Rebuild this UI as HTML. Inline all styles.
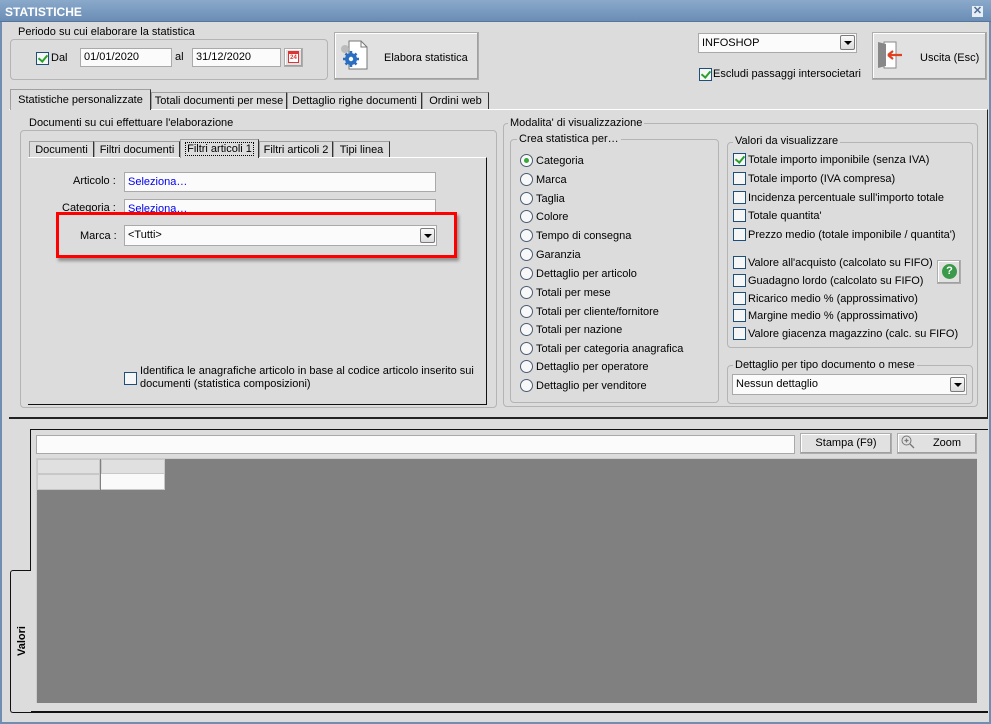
<!DOCTYPE html>
<html><head><meta charset="utf-8"><style>
*{box-sizing:border-box;margin:0;padding:0}
body{width:991px;height:724px;overflow:hidden;background:#dcdcdc;font-family:"Liberation Sans",sans-serif;font-size:11px;color:#000;position:relative}
.a{position:absolute}
.t{position:absolute;white-space:nowrap;line-height:14px}
.gb{position:absolute;border:1px solid #b4b4b4;border-radius:4px}
.gl{position:absolute;background:#dcdcdc;padding:0 2px;line-height:13px;white-space:nowrap}
.inp{position:absolute;background:#fbfbfb;border:1px solid #a9a9a9;line-height:16px;padding-left:3px;white-space:nowrap;overflow:hidden}
.btn{position:absolute;background:#e1e1e1;border:1px solid #adadad;box-shadow:inset -1px -1px 0 #a0a0a0,inset 1px 1px 0 #fff;text-align:center}
.cb{position:absolute;width:13px;height:13px;border:1px solid #1c4f7c;background:#f6f6f6}
.cb.on::after{content:"";position:absolute;left:3px;top:0px;width:4px;height:7px;border:solid #2aa02a;border-width:0 2px 2px 0;transform:rotate(40deg)}
.rd{position:absolute;width:13px;height:13px;border:1px solid #4a5c74;border-radius:50%;background:#f8f8f8}
.rd.on::after{content:"";position:absolute;left:3px;top:3px;width:5px;height:5px;border-radius:50%;background:#38a838}
.dd{position:absolute;width:15px;height:15px;border:1px solid #7a7a7a;border-radius:2px;background:linear-gradient(#fafafa,#dcdcdc)}
.dd::after{content:"";position:absolute;left:3px;top:5px;border:4px solid transparent;border-top:4px solid #000;border-bottom:0}
.tab{position:absolute;border:1px solid #a0a0a0;border-bottom:none;border-right:1px solid #333;background:#dcdcdc;line-height:16px;white-space:nowrap;text-align:center;overflow:hidden}
</style></head><body>
<div class="a" style="left:0;top:0;width:991px;height:724px;border:2px solid #6f8eb2;border-top:none"></div>
<div class="a" style="left:0;top:0;width:991px;height:22px;background:linear-gradient(#8aa9cb,#6b8db5);border-bottom:1px solid #55759c"></div>
<div class="t" style="left:5px;top:5px;color:#fff;font-weight:bold;font-size:12px">STATISTICHE</div>
<div class="a" style="left:972px;top:6px;width:11px;height:11px;background:#e8eef5;color:#4f6f95;font-size:11px;line-height:10px;text-align:center;font-weight:bold">✕</div>

<div class="gb" style="left:10px;top:39px;width:318px;height:41px"></div>
<div class="gl" style="left:16px;top:26px">Periodo su cui elaborare la statistica</div>
<div class="cb on" style="left:36px;top:52px"></div>
<div class="t" style="left:51px;top:51px">Dal</div>
<div class="inp" style="left:80px;top:48px;width:92px;height:19px">01/01/2020</div>
<div class="t" style="left:175px;top:50px">al</div>
<div class="inp" style="left:192px;top:48px;width:89px;height:19px">31/12/2020</div>
<div class="btn" style="left:284px;top:48px;width:19px;height:19px"></div>
<div class="a" style="left:288px;top:51px;width:11px;height:12px;background:#fff;border:1px solid #d33;border-top:3px solid #d33;color:#d33;font-size:6px;line-height:8px;text-align:center;font-weight:bold">24</div>

<div class="btn" style="left:334px;top:32px;width:145px;height:48px"></div>
<svg class="a" style="left:338px;top:39px" width="32" height="32" viewBox="0 0 32 32"><path d="M11 2h12l6 6v22H11z" fill="#fff" stroke="#777"/><path d="M23 2v6h6" fill="none" stroke="#777"/><circle cx="7" cy="10" r="4" fill="#bbb"/><circle cx="13" cy="20" r="6" fill="#2a6fc0"/><g stroke="#2a6fc0" stroke-width="2.5"><path d="M13 12v16M5 20h16M7.5 14.5l11 11M18.5 14.5l-11 11"/></g><circle cx="13" cy="20" r="2.2" fill="#fff"/></svg>
<div class="t" style="left:384px;top:51px">Elabora statistica</div>

<div class="inp" style="left:698px;top:33px;width:159px;height:20px;line-height:18px">INFOSHOP</div>
<div class="dd" style="left:840px;top:35px"></div>
<div class="cb on" style="left:699px;top:68px"></div>
<div class="t" style="left:713px;top:67px">Escludi passaggi intersocietari</div>
<div class="btn" style="left:872px;top:32px;width:115px;height:48px"></div>
<svg class="a" style="left:876px;top:38px" width="30" height="34" viewBox="0 0 30 34"><rect x="8" y="4" width="12" height="26" fill="#fff" stroke="#888"/><path d="M2 4l8 2v22l-8 2z" fill="#888"/><path d="M12 17h14M12 17l5-4M12 17l5 4" stroke="#e04020" stroke-width="2.2" fill="none"/></svg>
<div class="t" style="left:920px;top:51px">Uscita (Esc)</div>

<div class="a" style="left:9px;top:109px;width:979px;height:310px;border-top:1px solid #fff;border-right:1px solid #222;border-bottom:2px solid #222"></div>
<div class="tab" style="left:10px;top:89px;width:141px;height:21px;line-height:20px;z-index:2">Statistiche personalizzate</div>
<div class="tab" style="left:151px;top:92px;width:136px;height:17px">Totali documenti per mese</div>
<div class="tab" style="left:287px;top:92px;width:135px;height:17px">Dettaglio righe documenti</div>
<div class="tab" style="left:422px;top:92px;width:67px;height:17px">Ordini web</div>

<div class="gb" style="left:20px;top:130px;width:477px;height:278px"></div>
<div class="gl" style="left:27px;top:117px">Documenti su cui effettuare l'elaborazione</div>
<div class="a" style="left:28px;top:157px;width:459px;height:248px;border-top:1px solid #fff;border-right:1px solid #111;border-bottom:1px solid #111"></div>
<div class="tab" style="left:29px;top:141px;width:65px;height:16px">Documenti</div>
<div class="tab" style="left:94px;top:141px;width:86px;height:16px">Filtri documenti</div>
<div class="tab" style="left:180px;top:139px;width:79px;height:19px;z-index:2;line-height:18px"><span style="outline:1px dotted #000;padding:0 1px">Filtri articoli 1</span></div>
<div class="tab" style="left:259px;top:141px;width:74px;height:16px">Filtri articoli 2</div>
<div class="tab" style="left:333px;top:141px;width:57px;height:16px">Tipi linea</div>

<div class="t" style="left:73px;top:174px">Articolo :</div>
<div class="inp" style="left:124px;top:172px;width:312px;height:20px;color:#0000ee;line-height:18px">Seleziona…</div>
<div class="t" style="left:62px;top:201px">Categoria :</div>
<div class="inp" style="left:124px;top:199px;width:312px;height:20px;color:#0000ee;line-height:18px">Seleziona…</div>
<div class="a" style="left:56px;top:212px;width:401px;height:46px;border:3px solid #f00;box-shadow:2px 3px 3px rgba(0,0,0,.35);background:#dcdcdc"></div>
<div class="t" style="left:80px;top:229px">Marca :</div>
<div class="inp" style="left:124px;top:225px;width:313px;height:21px;line-height:19px">&lt;Tutti&gt;</div>
<div class="dd" style="left:420px;top:228px"></div>
<div class="cb" style="left:124px;top:372px"></div>
<div class="t" style="left:140px;top:365px;line-height:13px">Identifica le anagrafiche articolo in base al codice articolo inserito sui<br>documenti (statistica composizioni)</div>

<div class="gb" style="left:503px;top:123px;width:475px;height:284px"></div>
<div class="gl" style="left:508px;top:117px">Modalita' di visualizzazione</div>
<div class="gb" style="left:510px;top:139px;width:209px;height:264px"></div>
<div class="gl" style="left:517px;top:133px">Crea statistica per…</div>
<div class="rd on" style="left:520px;top:154px"></div><div class="t" style="left:536px;top:154px">Categoria</div>
<div class="rd" style="left:520px;top:173px"></div><div class="t" style="left:536px;top:173px">Marca</div>
<div class="rd" style="left:520px;top:192px"></div><div class="t" style="left:536px;top:192px">Taglia</div>
<div class="rd" style="left:520px;top:210px"></div><div class="t" style="left:536px;top:210px">Colore</div>
<div class="rd" style="left:520px;top:229px"></div><div class="t" style="left:536px;top:229px">Tempo di consegna</div>
<div class="rd" style="left:520px;top:248px"></div><div class="t" style="left:536px;top:248px">Garanzia</div>
<div class="rd" style="left:520px;top:267px"></div><div class="t" style="left:536px;top:267px">Dettaglio per articolo</div>
<div class="rd" style="left:520px;top:286px"></div><div class="t" style="left:536px;top:286px">Totali per mese</div>
<div class="rd" style="left:520px;top:305px"></div><div class="t" style="left:536px;top:305px">Totali per cliente/fornitore</div>
<div class="rd" style="left:520px;top:323px"></div><div class="t" style="left:536px;top:323px">Totali per nazione</div>
<div class="rd" style="left:520px;top:342px"></div><div class="t" style="left:536px;top:342px">Totali per categoria anagrafica</div>
<div class="rd" style="left:520px;top:360px"></div><div class="t" style="left:536px;top:360px">Dettaglio per operatore</div>
<div class="rd" style="left:520px;top:379px"></div><div class="t" style="left:536px;top:379px">Dettaglio per venditore</div>

<div class="gb" style="left:727px;top:142px;width:246px;height:206px"></div>
<div class="gl" style="left:733px;top:135px">Valori da visualizzare</div>
<div class="cb on" style="left:733px;top:153px"></div><div class="t" style="left:748px;top:153px">Totale importo imponibile (senza IVA)</div>
<div class="cb" style="left:733px;top:172px"></div><div class="t" style="left:748px;top:172px">Totale importo (IVA compresa)</div>
<div class="cb" style="left:733px;top:191px"></div><div class="t" style="left:748px;top:191px">Incidenza percentuale sull'importo totale</div>
<div class="cb" style="left:733px;top:209px"></div><div class="t" style="left:748px;top:209px">Totale quantita'</div>
<div class="cb" style="left:733px;top:228px"></div><div class="t" style="left:748px;top:228px">Prezzo medio (totale imponibile / quantita')</div>
<div class="cb" style="left:733px;top:256px"></div><div class="t" style="left:748px;top:256px">Valore all'acquisto (calcolato su FIFO)</div>
<div class="cb" style="left:733px;top:274px"></div><div class="t" style="left:748px;top:274px">Guadagno lordo (calcolato su FIFO)</div>
<div class="cb" style="left:733px;top:292px"></div><div class="t" style="left:748px;top:292px">Ricarico medio % (approssimativo)</div>
<div class="cb" style="left:733px;top:309px"></div><div class="t" style="left:748px;top:309px">Margine medio % (approssimativo)</div>
<div class="cb" style="left:733px;top:327px"></div><div class="t" style="left:748px;top:327px">Valore giacenza magazzino (calc. su FIFO)</div>
<div class="btn" style="left:937px;top:260px;width:24px;height:24px"></div>
<div class="a" style="left:942px;top:264px;width:15px;height:15px;border-radius:50%;background:#3a9a4a;color:#fff;font-weight:bold;font-size:11px;line-height:15px;text-align:center">?</div>

<div class="gb" style="left:727px;top:365px;width:246px;height:39px"></div>
<div class="gl" style="left:733px;top:359px">Dettaglio per tipo documento o mese</div>
<div class="inp" style="left:732px;top:374px;width:235px;height:21px;line-height:19px">Nessun dettaglio</div>
<div class="dd" style="left:950px;top:377px"></div>

<div class="a" style="left:30px;top:429px;width:958px;height:284px;border-top:1px solid #111;border-left:1px solid #111;border-bottom:2px solid #111"></div>
<div class="a" style="left:10px;top:570px;width:21px;height:143px;border:1px solid #111;border-right:none;border-radius:3px 0 0 3px;background:#dcdcdc"></div>
<div class="t" style="left:15px;top:656px;transform:rotate(-90deg);transform-origin:left top;font-weight:bold;font-size:11px">Valori</div>
<div class="inp" style="left:36px;top:435px;width:759px;height:19px"></div>
<div class="btn" style="left:800px;top:433px;width:92px;height:21px;line-height:19px">Stampa (F9)</div>
<div class="btn" style="left:897px;top:433px;width:80px;height:21px;line-height:19px;padding-left:20px">Zoom</div>
<svg class="a" style="left:901px;top:435px" width="14" height="14" viewBox="0 0 14 14"><circle cx="5.5" cy="5.5" r="4.5" fill="none" stroke="#777"/><path d="M9 9l4 4M3.5 5.5h4M5.5 3.5v4" stroke="#777" stroke-width="1.3"/></svg>
<div class="a" style="left:36px;top:458px;width:941px;height:245px;background:#808080;border-left:1px solid #ccc;border-top:1px solid #ccc"></div>
<div class="a" style="left:37px;top:459px;width:63px;height:15px;background:#e0e0e0;border:1px solid #c8c8c8"></div>
<div class="a" style="left:101px;top:459px;width:64px;height:15px;background:#e0e0e0;border:1px solid #c8c8c8"></div>
<div class="a" style="left:37px;top:474px;width:63px;height:16px;background:#e0e0e0;border:1px solid #c8c8c8"></div>
<div class="a" style="left:101px;top:474px;width:64px;height:16px;background:#fafafa;border-right:1px solid #c8c8c8;border-bottom:1px solid #c8c8c8"></div>
</body></html>
